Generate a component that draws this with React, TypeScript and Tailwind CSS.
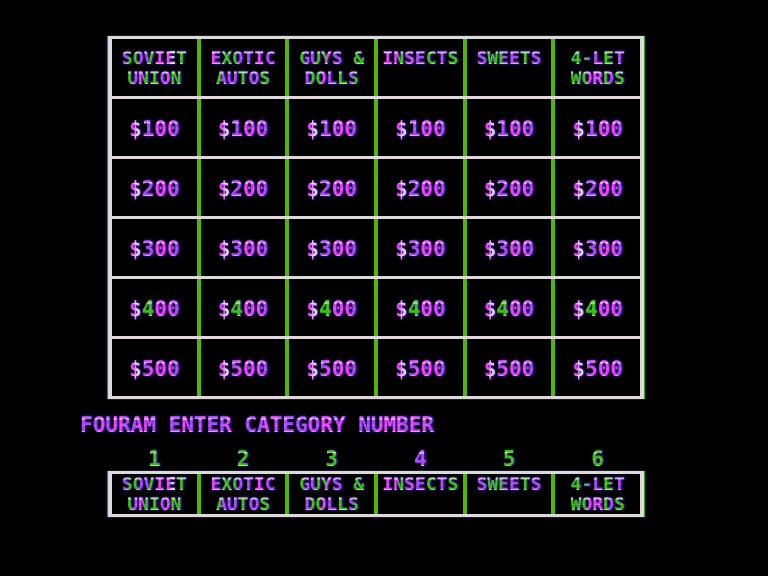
import type { CSSProperties } from 'react';

type Line = { text: string; hues: string };

interface Category {
    id: number;
    hue: string;
    lines: Line[];
}

// g green, v violet, m magenta, w white. Two hues per character.
const palette: Record<string, string> = {
    g: '#34c408',
    v: '#a44af0',
    m: '#e044f0',
    w: '#dccfe0',
};

// pale bands where the top, middle and bottom strokes of the capitals fall
const strokeBands =
    'linear-gradient(180deg, transparent 18%, #ffffff90 22%, #ffffff90 26%, transparent 31%, transparent 47%, #ffffff40 51%, transparent 55%, transparent 73%, #ffffff90 77%, #ffffff90 81%, transparent 85%)';

const categories: Category[] = [
    { id: 1, hue: 'gg', lines: [{ text: 'SOVIET', hues: 'vggvvgmmmwgg' }, { text: 'UNION', hues: 'gvmgggvmgg' }] },
    { id: 2, hue: 'gg', lines: [{ text: 'EXOTIC', hues: 'mvgggvvvmmvv' }, { text: 'AUTOS', hues: 'gvvvggvvgg' }] },
    { id: 3, hue: 'gg', lines: [{ text: 'GUYS &', hues: 'gvvggmvvvvgg' }, { text: 'DOLLS', hues: 'vggmvvggvg' }] },
    { id: 4, hue: 'vv', lines: [{ text: 'INSECTS', hues: 'mmmgvmvvggvvgg' }] },
    { id: 5, hue: 'gg', lines: [{ text: 'SWEETS', hues: 'vvgggvvvggvv' }] },
    { id: 6, hue: 'gg', lines: [{ text: '4-LET', hues: 'gggvvvggvv' }, { text: 'WORDS', hues: 'gggmmmgvgg' }] },
];

const prices: Line[] = [
    { text: '$100', hues: 'mwvvmmmv' },
    { text: '$200', hues: 'mwvvmmmv' },
    { text: '$300', hues: 'mwvvmmmv' },
    { text: '$400', hues: 'mwggmmmv' },
    { text: '$500', hues: 'mwvmmmmv' },
];

const prompt: Line = {
    text: 'FOURAM ENTER CATEGORY NUMBER',
    hues: 'vvvmvmmvvmmvvvvvmvvmvvvmvvvvvmmvvvvvmvmmvmvvvvvmmmmvmvmv',
};

const hueStyle = (hues: string): CSSProperties => {
    const step = 100 / hues.length;
    const stops = hues.split('').map((h, i) => `${palette[h]} ${(i + 0.3) * step}% ${(i + 0.7) * step}%`);
    return { backgroundImage: `${strokeBands}, linear-gradient(90deg, ${stops.join(', ')})` };
};

const Glow = ({ text, hues }: Line) => (
    <span
        className="inline-block whitespace-pre bg-clip-text text-transparent drop-shadow-[1px_0_1px_#5a24d0]"
        style={hueStyle(hues)}
    >
        {text}
    </span>
);

const Label = ({ lines }: { lines: Line[] }) => (
    <>
        {lines.map((line) => (
            <span key={line.text} className="block h-5">
                <Glow {...line} />
            </span>
        ))}
    </>
);

const frame = 'w-full table-fixed border-separate border-spacing-0 border-x-2 border-t-3 border-[#dcd8dc] shadow-[-1px_0_1px_#7a3cd0,1px_0_1px_#3a9c10]';
const cell = 'border-b-3 border-[#dcd8dc] p-0 align-top *:border-x-2 *:border-[#4fb800] first:*:border-l-[#dcd8dc] last:*:border-r-[#dcd8dc]';

const Board = () => (
    <table className={frame}>
        <thead>
            <tr>
                {categories.map((c) => (
                    <th key={c.id} scope="col" className={cell}>
                        <div className="h-[57px] pt-[9px] text-[18px] leading-5">
                            <Label lines={c.lines} />
                        </div>
                    </th>
                ))}
            </tr>
        </thead>
        <tbody>
            {prices.map((price) => (
                <tr key={price.text}>
                    {categories.map((c) => (
                        <td key={c.id} className={cell}>
                            <div className="h-[57px] pt-[18px] text-center text-[21px] leading-6">
                                <Glow {...price} />
                            </div>
                        </td>
                    ))}
                </tr>
            ))}
        </tbody>
    </table>
);

const CategoryPicker = () => (
    <div>
        <div className="grid grid-cols-6 px-0.5 text-center text-[21px] leading-6">
            {categories.map((c) => (
                <span key={c.id}>
                    <Glow text={String(c.id)} hues={c.hue} />
                </span>
            ))}
        </div>
        <table className={frame}>
            <tbody>
                <tr>
                    {categories.map((c) => (
                        <th key={c.id} className={cell}>
                            <div className="h-10 text-[18px] leading-5">
                                <Label lines={c.lines} />
                            </div>
                        </th>
                    ))}
                </tr>
            </tbody>
        </table>
    </div>
);

export default function App() {
    return (
        <main className="min-h-screen bg-black pt-9 pr-[124px] pl-20 font-['DejaVu_Sans_Mono',monospace] font-bold">
            <div className="pl-7">
                <Board />
            </div>
            <p className="pt-[14px] pb-[10px] text-[21px] leading-6 whitespace-nowrap">
                <Glow {...prompt} />
            </p>
            <div className="pl-7">
                <CategoryPicker />
            </div>
        </main>
    );
}
